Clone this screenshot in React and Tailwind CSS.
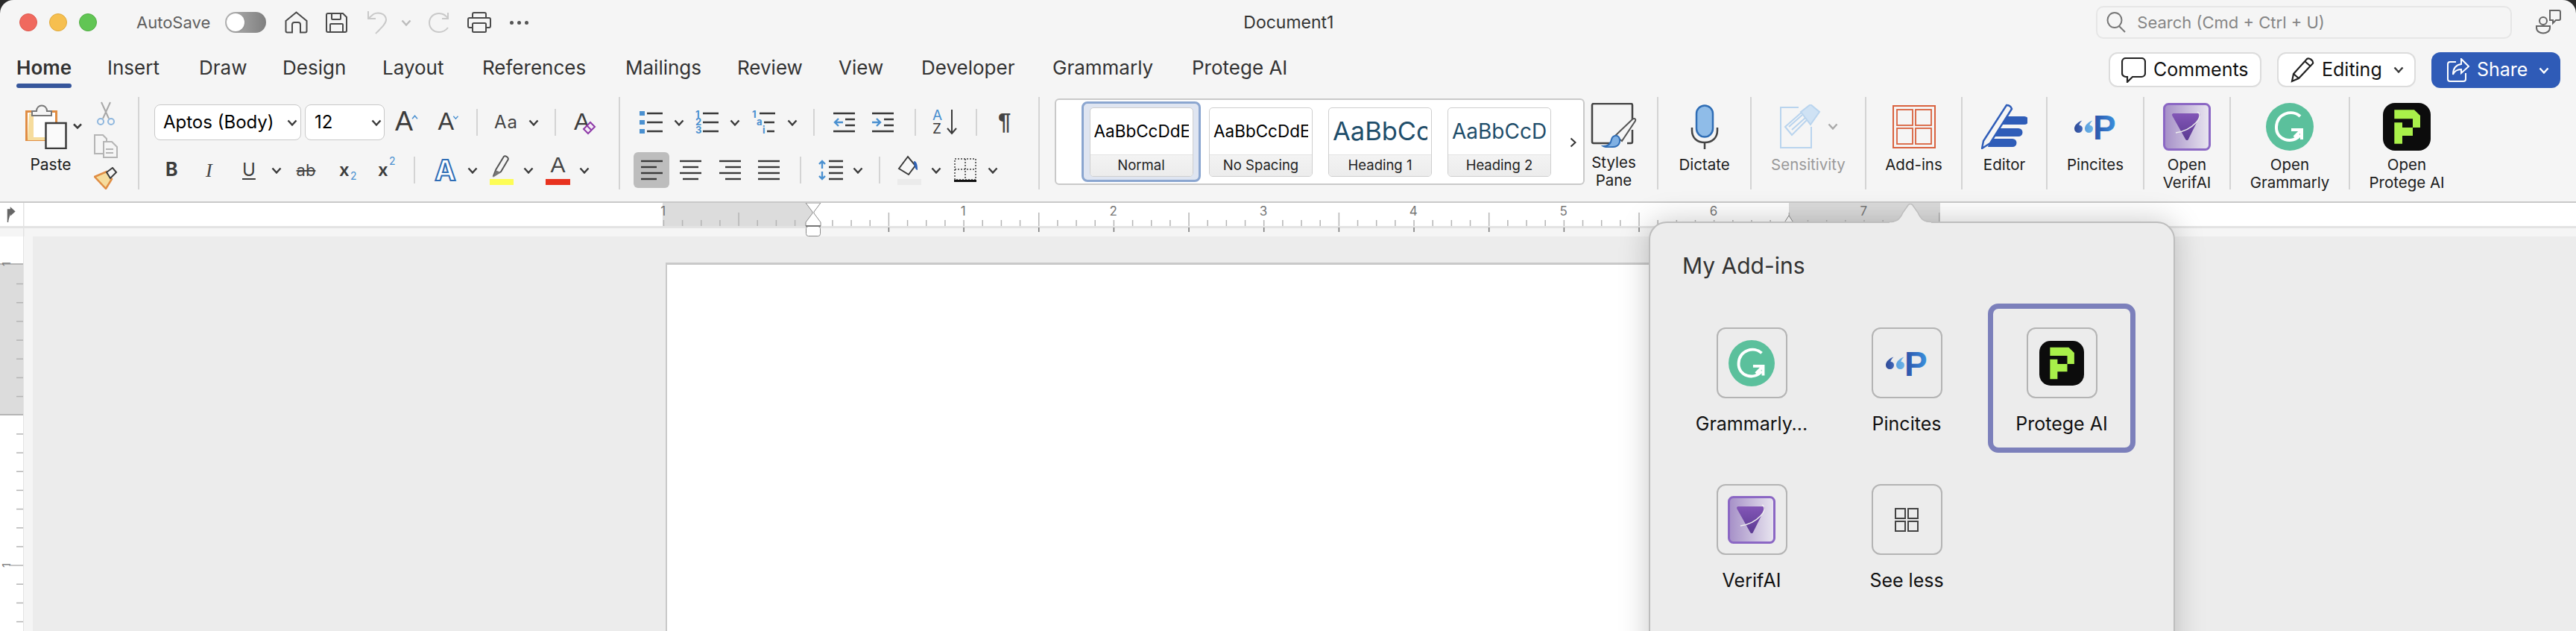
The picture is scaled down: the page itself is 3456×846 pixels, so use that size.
import React from 'react';

const Chev = ({ className = '' }) => (
    <svg viewBox="0 0 14 9" className={`w-[14px] h-[9px] shrink-0 ${className}`} fill="none" stroke="#3a3a3a" strokeWidth="2.4">
        <path d="M1.5 1.5 7 7.5l5.5-6" />
    </svg>
);

const Sep = ({ className = '' }) => <div className={`w-[2px] h-[36px] shrink-0 bg-[#d4d4d4] ${className}`} />;

const Lines = ({ rows, stroke = '#3a3a3a', className = '' }) => (
    <svg viewBox="0 0 29 28" className={`w-[29px] h-[28px] shrink-0 ${className}`} stroke={stroke} strokeWidth="2.4">
        {rows.map((r, i) => <path key={i} d={`M${r[0]} ${2 + i * 8}H${r[1]}`} />)}
    </svg>
);

const HomeIcon = () => (
    <svg viewBox="0 0 31 30" className="w-[31px] h-[30px] ml-[25px]" fill="none" stroke="#4a4a4a" strokeWidth="2">
        <path d="M1.5 13 15.5 1.5 29.5 13v13.5a2 2 0 0 1-2 2H21V18a3 3 0 0 0-3-3h-5a3 3 0 0 0-3 3v10.500H3.500a2 2 0 0 1-2-2z" />
    </svg>
);

const SaveIcon = () => (
    <svg viewBox="0 0 29 27" className="w-[29px] h-[27px] ml-[24px]" fill="none" stroke="#4a4a4a" strokeWidth="2">
        <path d="M3 1h20l5 5v18a2 2 0 0 1-2 2H3a2 2 0 0 1-2-2V3a2 2 0 0 1 2-2z" />
        <path d="M8 1v7a1 1 0 0 0 1 1h10a1 1 0 0 0 1-1V1M6 26V16a1 1 0 0 1 1-1h15a1 1 0 0 1 1 1v10" />
    </svg>
);

const UndoIcon = () => (
    <svg viewBox="0 0 28 32" className="w-[28px] h-[32px] ml-[26px]" fill="none" stroke="#c9c9c9" strokeWidth="2">
        <path d="M2 1v10h10M2 11 9 5c5-3 16-2 17 7 .5 5-6 11-14 19" />
    </svg>
);

const RedoIcon = () => (
    <svg viewBox="0 0 29 28" className="w-[29px] h-[28px] ml-[22px]" fill="none" stroke="#c9c9c9" strokeWidth="2">
        <path d="M27 1v8h-8M27 9c-3-5-7-7-12-7C7 2 2 8 2 14.500 2 21 7 27 15 27c5 0 9-2 12-6" />
    </svg>
);

const PrintIcon = () => (
    <svg viewBox="0 0 32 28" className="w-[32px] h-[28px] ml-[24px]" fill="none" stroke="#4a4a4a" strokeWidth="2">
        <path d="M7 8V3a2 2 0 0 1 2-2h14a2 2 0 0 1 2 2v5M7 21H3a2 2 0 0 1-2-2v-9a2 2 0 0 1 2-2h26a2 2 0 0 1 2 2v9a2 2 0 0 1-2 2h-4" />
        <rect x="7" y="15" width="18" height="12" rx="1.500" />
    </svg>
);

const PasteIcon = () => (
    <svg viewBox="0 0 76 60" className="w-[76px] h-[60px] absolute left-0 top-0" fill="none">
        <path d="M1.500 9.500h40v38h-40z" fill="#fff" stroke="#e08d43" strokeWidth="3" />
        <path d="M5 12h6v32h30v4H3z" fill="#f6dc9d" />
        <path d="M9 15V9h6c0-10 14-10 14 0h6v6z" fill="#f5f5f5" stroke="#777" strokeWidth="2" />
        <rect x="27.500" y="25" width="27" height="34" fill="#fafafa" stroke="#3c3c3c" strokeWidth="2.500" />
        <path d="M65 26.500 70 31.500 75 26.500" stroke="#3a3a3a" strokeWidth="2.500" />
    </svg>
);

const ScissorsIcon = () => (
    <svg viewBox="0 0 32 32" className="w-[32px] h-[32px]" fill="none">
        <path d="M10 1 20 23M22 1 12 23" stroke="#a8a8a8" strokeWidth="2" />
        <circle cx="9" cy="27" r="4" stroke="#8fb7de" strokeWidth="2" />
        <circle cx="23" cy="27" r="4" stroke="#8fb7de" strokeWidth="2" />
    </svg>
);

const CopyIcon = () => (
    <svg viewBox="0 0 32 32" className="w-[32px] h-[32px] mt-[12px]" fill="none" stroke="#b5b5b5" strokeWidth="2">
        <path d="M13 26H1V1h11l5 5v4" />
        <path d="M13 10h11l7 7v14H13zM16 20h10M16 25h10" />
    </svg>
);

const BrushIcon = () => (
    <svg viewBox="0 0 32 30" className="w-[32px] h-[30px] mt-[12px]">
        <path d="M1 13 17 6l7 10-8 13z" fill="#f6dc9d" stroke="#e08d43" strokeWidth="2.500" />
        <path d="M17 6 23 1l2 3-1 3 6 1-8 8" fill="#f5f5f5" />
        <path d="M17 7 25 1l5 6-8 8z" fill="none" stroke="#3c3c3c" strokeWidth="2" />
    </svg>
);

const GrowIcon = ({ up }) => (
    <span className="relative block w-[31px] h-[26px] shrink-0">
        <span className="absolute left-0 -bottom-[4px] text-[#3c3c3c] font-['Liberation_Sans',sans-serif] leading-none text-[36px]">A</span>
        <svg viewBox="0 0 10 7" className="w-[9px] h-[6px] absolute right-0 top-[3px]" fill="none" stroke="#4a90d0" strokeWidth="1.800">
            <path d={up ? 'M1 6 5 1.500 9 6' : 'M1 1 5 5.500 9 1'} />
        </svg>
    </span>
);

const ClearFormatIcon = () => (
    <span className="relative block w-[31px] h-[34px] ml-[24px] shrink-0">
        <span className="absolute left-0 top-0 text-[#3c3c3c] font-['Liberation_Sans',sans-serif] leading-none text-[32px]">A</span>
        <svg viewBox="0 0 20 20" className="w-[20px] h-[20px] absolute right-0 -bottom-[1px]" fill="#f4ecf7" stroke="#8e3aa8" strokeWidth="2">
            <path d="M2 11 11 2l6 6-9 9z" />
            <path d="M6.500 6.500l6 6" />
        </svg>
    </span>
);

const ColorA = ({ bar, className = '' }) => (
    <span className={`relative block w-[33px] h-[40px] shrink-0 ${className}`}>
        <span className="absolute left-0 right-0 top-[-2px] text-center text-[#444] font-['Liberation_Sans',sans-serif] leading-none text-[30px]">A</span>
        <span className={`absolute left-0 right-0 bottom-0 h-[8px] ${bar}`} />
    </span>
);

const HighlightIcon = () => (
    <span className="relative block w-[32px] h-[40px] shrink-0 ml-[16px]">
        <svg viewBox="0 0 32 32" className="w-[32px] h-[31px] absolute left-0 top-0" fill="none">
            <path d="M5 28 8 20 19 2c2-2 7 1 6 4L15 23z" fill="#f5f5f5" stroke="#555" strokeWidth="2" />
            <path d="M4 31 8 21l7 3z" fill="#777" />
        </svg>
        <span className="absolute left-0 right-0 bottom-0 h-[8px] bg-[#fdfd55]" />
    </span>
);

const BulletsIcon = ({ kind, className = '' }) => {
    const labels = kind === 'num' ? ['1', '2', '3'] : kind === 'multi' ? ['1', 'a', 'i'] : null;
    return (
        <span className={`relative block w-[31px] h-[30px] shrink-0 ${className}`}>
            <svg viewBox="0 0 31 30" className="w-[31px] h-[30px] absolute inset-0" stroke="#3a3a3a" strokeWidth="2.400">
                <path d={kind === 'multi' ? 'M10 3h21M16 15h14M20 27h10' : 'M10 3h21M10 15h21M10 27h21'} />
                {kind === 'bullet' && <path d="M0 3h7M0 15h7M0 27h7" stroke="#4a90d0" strokeWidth="6" />}
            </svg>
            {labels && labels.map((t, i) => (
                <span key={i} className={`absolute ${kind === 'multi' ? (i === 0 ? 'left-0' : i === 1 ? 'left-[6px]' : 'left-[14px]') : 'left-0'} ${i === 0 ? '-top-[3px]' : i === 1 ? 'top-[7px]' : 'top-[18px]'} text-[13px] leading-[14px] font-bold text-[#4a90d0]`}>{t}</span>
            ))}
        </span>
    );
};

const IndentIcon = ({ dir, className = '' }) => (
    <svg viewBox="0 0 29 28" className={`w-[29px] h-[28px] shrink-0 ${className}`} fill="none" stroke="#3a3a3a" strokeWidth="2.400">
        <path d="M0 2h29M16 10h13M16 18h13M0 26h29" />
        <path d={dir === 'out' ? 'M13 14H2M7 9l-5 5 5 5' : 'M0 14h11M6 9l5 5-5 5'} stroke="#4a90d0" />
    </svg>
);

const SortIcon = () => (
    <span className="relative block w-[33px] h-[34px] ml-[22px] shrink-0">
        <span className="absolute left-0 -top-[1px] text-[19px] leading-[18px] text-[#4a90d0]">A</span>
        <span className="absolute left-0 top-[17px] text-[19px] leading-[18px] text-[#3a3a3a]">Z</span>
        <svg viewBox="0 0 14 34" className="w-[14px] h-[34px] absolute right-0 top-0" fill="none" stroke="#3a3a3a" strokeWidth="2">
            <path d="M7 0v32M1 25l6 7 6-7" />
        </svg>
    </span>
);

const LineSpacingIcon = () => (
    <svg viewBox="0 0 33 28" className="w-[33px] h-[28px] ml-[23px] shrink-0" fill="none" stroke="#3a3a3a" strokeWidth="2.400">
        <path d="M14 2h19M14 10h19M14 18h19M14 26h19" />
        <path d="M5 3v9M1 6l4-4 4 4M5 25v-9M1 22l4 4 4-4" stroke="#4a90d0" />
    </svg>
);

const ShadingIcon = () => (
    <span className="relative block w-[32px] h-[40px] ml-[23px] shrink-0">
        <svg viewBox="0 0 32 32" className="w-[32px] h-[32px] absolute left-0 top-0" fill="none">
            <path d="M2 18 14 2l10 12-9 12z" stroke="#3c3c3c" strokeWidth="2" fill="#f8f8f8" />
            <path d="M22 8c3 0 5 3 5 12-3 0-5-6-5-12z" fill="#2f62b5" />
        </svg>
        <span className="absolute left-0 right-0 bottom-0 h-[8px] bg-[#ebebeb]" />
    </span>
);

const BordersIcon = () => (
    <svg viewBox="0 0 30 32" className="w-[30px] h-[32px] ml-[17px] shrink-0" fill="none">
        <path d="M1 1h28v28H1zM15 1v28M1 15h28" stroke="#3c3c3c" strokeWidth="1.500" strokeDasharray="2 2" />
        <path d="M0 30.500h30" stroke="#111" strokeWidth="3" />
    </svg>
);

const StylesIcon = () => (
    <svg viewBox="0 0 62 60" className="w-[62px] h-[60px]" fill="none">
        <path d="M32 54H4a2 2 0 0 1-2-2V3a2 2 0 0 1 2-2h50a2 2 0 0 1 2 2v20M56 36v16a2 2 0 0 1-2 2h-5" stroke="#444" strokeWidth="2.500" />
        <path d="M33 44 56 22c2-2 5-1 4 2L42 51z" fill="#f5f5f5" stroke="#555" strokeWidth="2" />
        <path d="M17 58c7 0 10-3 11-9 1-5 7-7 10-3 3 6 0 13-8 13-5 0-10 1-13-1z" fill="#7fb0e3" stroke="#2f6db5" strokeWidth="2" />
    </svg>
);

const MicIcon = () => (
    <svg viewBox="0 0 38 60" className="w-[38px] h-[60px]" fill="none">
        <rect x="8" y="1.500" width="22" height="42" rx="11" fill="#8fbce8" stroke="#2f6db5" strokeWidth="2.500" />
        <path d="M2 31v4c0 10 7 16 17 16s17-6 17-16v-4M19 51v9" stroke="#444" strokeWidth="2.500" />
    </svg>
);

const SensitivityIcon = () => (
    <span className="flex items-center">
        <svg viewBox="0 0 56 60" className="w-[56px] h-[60px]" fill="none" stroke="#b9d4ee" strokeWidth="2">
            <path d="M26 4H2v54h41V30" />
            <path d="M8 30 32 9l8 9-23 23z" fill="#f5f5f5" />
            <path d="M13 30 31 14M17 34 35 18" />
            <path d="M29 10 42 0l12 10-12 17z" fill="#cfe2f4" />
        </svg>
        <Chev className="ml-[9px] opacity-40" />
    </span>
);

const AddinsIcon = () => (
    <svg viewBox="0 0 58 58" className="w-[58px] h-[58px]" fill="none" stroke="#d9623f">
        <rect x="1" y="1" width="56" height="56" strokeWidth="2" />
        <rect x="6" y="6" width="21" height="21" strokeWidth="1.800" />
        <rect x="31" y="6" width="21" height="21" strokeWidth="1.800" />
        <rect x="6" y="31" width="21" height="21" strokeWidth="1.800" />
        <rect x="31" y="31" width="21" height="21" strokeWidth="1.800" />
    </svg>
);

const EditorIcon = () => (
    <svg viewBox="0 0 62 61" className="w-[62px] h-[61px]" fill="none">
        <path d="M28 17h30a4.500 4.500 0 0 1 0 11H22zM20 33h30a4.500 4.500 0 0 1 0 11H16zM12 47h30a4.500 4.500 0 0 1 0 11H9z" fill="#2f5db8" />
        <path d="M3 50 34 2c3 0 6 2 7 5L12 53 1 60z" fill="#f5f5f5" stroke="#2f5db8" strokeWidth="2.400" />
    </svg>
);

const PincitesIcon = () => (
    <svg viewBox="0 0 56 34" className="w-[56px] h-[34px]">
        <defs>
            <linearGradient id="pq1" x1="0" x2="1" y1="0" y2="0">
                <stop offset="0" stopColor="#2f4a96" />
                <stop offset="1" stopColor="#3f66b8" />
            </linearGradient>
            <linearGradient id="pq2" x1="0" x2="1" y1="0" y2="0">
                <stop offset="0" stopColor="#5a9fdd" />
                <stop offset="1" stopColor="#6db4e8" />
            </linearGradient>
            <linearGradient id="pp" x1="0" x2="1" y1="0" y2="0">
                <stop offset="0" stopColor="#2c4ea6" />
                <stop offset="1" stopColor="#3a92de" />
            </linearGradient>
        </defs>
        <path d="M10.500 8.500C5 10.500 0 14.500 0 19.500a5.500 5.500 0 0 0 11 0c0-3-2-4.500-4.500-4.500 0-2 2-4.500 4-6.500z" fill="url(#pq1)" />
        <path d="M24.500 8.500C19 10.500 14 14.500 14 19.500a5.500 5.500 0 0 0 11 0c0-3-2-4.500-4.500-4.500 0-2 2-4.500 4-6.500z" fill="url(#pq2)" />
        <text x="25" y="33.500" fontFamily="Liberation Sans, sans-serif" fontWeight="700" fontSize="46" fill="url(#pp)">P</text>
    </svg>
);

const VerifIcon = ({ size = 'w-[64px] h-[64px]' }) => (
    <svg viewBox="0 0 64 64" className={size}>
        <defs>
            <linearGradient id="vbg" x1="0" x2="1" y1="0" y2="0">
                <stop offset="0" stopColor="#a58fc7" />
                <stop offset="1" stopColor="#e9e6f0" />
            </linearGradient>
            <linearGradient id="vtri" x1="0" x2="0" y1="0" y2="1">
                <stop offset="0" stopColor="#8155b5" />
                <stop offset="1" stopColor="#5d3c94" />
            </linearGradient>
        </defs>
        <rect x="1.500" y="1.500" width="61" height="61" rx="6" fill="url(#vbg)" stroke="#8b67c4" strokeWidth="3" />
        <path d="M14 16H48L32 48z" fill="url(#vtri)" stroke="url(#vtri)" strokeWidth="4" strokeLinejoin="round" />
        <path d="M46 12C56 17 40 37 17 40" fill="none" stroke="#eee" strokeWidth="1.500" />
    </svg>
);

const GrammarlyIcon = ({ size = 'w-[64px] h-[64px]' }) => (
    <svg viewBox="0 0 64 64" className={size} fill="none">
        <circle cx="32" cy="32" r="32" fill="#5bc09c" />
        <path d="M46 18C35 8 15 14 14 32c-1 18 22 24 32 11" stroke="#fff" strokeWidth="4" />
        <path d="M34 36h14v13M48 36 38 46" stroke="#fff" strokeWidth="4" />
    </svg>
);

const ProtegeIcon = ({ size = 'w-[64px] h-[64px]' }) => (
    <svg viewBox="0 0 64 64" className={size}>
        <rect width="64" height="64" rx="16" fill="#0c0c0c" />
        <path d="M15.300 9.300H42L50 17V33H40V44H26V54.700H15.300V26.300H26V33H40V21.300H15.300z" fill="#a9f04a" />
    </svg>
);

const BigButton = ({ icon, label, sub, gray, className }) => (
    <div className={`flex flex-col items-center shrink-0 ${className}`}>
        <div className="h-[79px] flex items-center justify-center">{icon}</div>
        <div className={`text-[20.500px] leading-[24px] text-center whitespace-nowrap ${gray ? 'text-[#9a9a9a]' : 'text-[#1c1c1c]'}`}>
            <div>{label}</div>
            {sub && <div>{sub}</div>}
        </div>
    </div>
);

const StyleTile = ({ text, label, preview, className = '' }) => (
    <div className={`w-[139px] h-[93px] rounded-[5px] border border-[#cfcfcf] bg-white flex flex-col overflow-hidden shrink-0 ${className}`}>
        <div className="h-[62px] mx-[5px] flex items-center overflow-hidden">
            <span className={`whitespace-nowrap ${preview}`}>{text}</span>
        </div>
        <div className="flex-1 bg-gradient-to-b from-[#f3f3f3] to-[#ececec] border-t border-[#e4e4e4] flex items-center justify-center text-[18.500px] text-[#222]">{label}</div>
    </div>
);

const TABS = [
    ['Home', 'w-[122px]'], ['Insert', 'w-[123px]'], ['Draw', 'w-[112px]'], ['Design', 'w-[134px]'],
    ['Layout', 'w-[134px]'], ['References', 'w-[192px]'], ['Mailings', 'w-[150px]'], ['Review', 'w-[136px]'],
    ['View', 'w-[111px]'], ['Developer', 'w-[176px]'], ['Grammarly', 'w-[187px]'], ['Protege AI', 'w-[140px]'],
];

const ZERO = 1091;
const STEP = 25.165;

const HRuler = () => {
    const ticks = [];
    for (let i = -8; i <= 60; i++) ticks.push(i);
    const nums = [[-8, '1'], [8, '1'], [16, '2'], [24, '3'], [32, '4'], [40, '5'], [48, '6'], [56, '7']];
    return (
        <svg className="block w-[3456px] h-[45px] shrink-0" viewBox="0 0 3456 45">
            <rect width="3456" height="31" fill="#fff" />
            <rect x="889" width="202" height="31" fill="#dcdcdc" />
            <rect x="2400" width="203" height="31" fill="#dcdcdc" />
            <rect y="31" width="3456" height="3" fill="#e3e3e3" />
            <rect y="34" width="3456" height="11" fill="#f5f5f5" />
            <rect x="31" width="1.500" height="45" fill="#e3e3e3" />
            <path d="M10.500 26V9h4V7l5 4.500-5 4.500v-3" fill="#666" stroke="#666" strokeWidth="1.500" />
            {ticks.map(i => {
                const x = ZERO + i * STEP;
                const half = i % 8 !== 0 && i % 4 === 0;
                return <rect key={i} x={x} y={half ? 13 : 23} width="1.500" height={half ? 18 : 8} fill="#b5b5b5" />;
            })}
            {ticks.filter(i => i > 0 && i % 4 === 0).map(i => (
                <rect key={i} x={ZERO + i * STEP} y="33" width="1.500" height="6" fill="#777" />
            ))}
            {nums.map(([i, t]) => (
                <text key={i} x={ZERO + i * STEP} y="17" textAnchor="middle" fontFamily="Inter, sans-serif" fontSize="17" fill="#777">{t}</text>
            ))}
            <path d="M1081 0h20l-9 12v2l9 12v5h-20v-5l9-12v-2z" fill="#fff" stroke="#8a8a8a" strokeWidth="1" />
            <rect x="1081.500" y="31.500" width="19" height="13" rx="3" fill="#fff" stroke="#8a8a8a" />
            <rect x="1081" y="30" width="20" height="2" fill="#777" />
            <path d="M2391 31l9-14 9 14z" fill="#fff" stroke="#8a8a8a" />
        </svg>
    );
};

const VRuler = () => {
    const marks = [];
    for (let i = -7; i < 21; i++) marks.push(i);
    return (
        <svg className="block w-[32px] h-[530px] shrink-0 bg-white" viewBox="0 0 32 530">
            <rect y="37" width="31" height="202" fill="#dcdcdc" />
            <rect y="36" width="31" height="2" fill="#b5b5b5" />
            <rect y="238" width="31" height="2" fill="#b5b5b5" />
            <rect x="31" width="1.500" height="530" fill="#e3e3e3" />
            {marks.map(i => {
                const y = 239 + i * STEP;
                const tall = (i + 100) % 4 === 0 && (i + 100) % 8 !== 0;
                if (i === 0) return null;
                return <rect key={i} x={tall ? 12 : 22} y={y} width={tall ? 19 : 9} height="1.500" fill="#b5b5b5" />;
            })}
            <text x="9" y="446" textAnchor="middle" fontFamily="Inter, sans-serif" fontSize="15" fill="#777" transform="rotate(-90 9 441)">1</text>
            <text x="9" y="42" textAnchor="middle" fontFamily="Inter, sans-serif" fontSize="15" fill="#777" transform="rotate(-90 9 37)">1</text>
        </svg>
    );
};

const AddinTile = ({ icon, label, selected }) => (
    <div className={`w-[198px] h-[200px] rounded-[14px] border-[7px] flex flex-col items-center pt-[25px] ${selected ? 'border-[#7c80bb]' : 'border-transparent'}`}>
        <div className="w-[95px] h-[95px] rounded-[12px] border-2 border-[#b4b4b4] flex items-center justify-center">{icon}</div>
        <div className="mt-[19px] text-[25px] leading-[30px] text-[#111] whitespace-nowrap">{label}</div>
    </div>
);

const App = () => {
    return (
        <div className="relative w-[3456px] h-[846px] overflow-hidden bg-[#2a2a2a] font-[Inter,sans-serif]">
            <div className="h-full rounded-t-[18px] overflow-hidden bg-[#f5f5f5] flex flex-col">
                {/* title bar */}
                <div className="h-[60px] shrink-0 flex items-center relative">
                    <div className="flex items-center pl-[26px] gap-[16px]">
                        <span className="w-[24px] h-[24px] rounded-full bg-[#f0695e] border border-[#dd5a50]" />
                        <span className="w-[24px] h-[24px] rounded-full bg-[#f6bf4f] border border-[#dfa93c]" />
                        <span className="w-[24px] h-[24px] rounded-full bg-[#61c554] border border-[#52ad45]" />
                    </div>
                    <span className="ml-[53px] text-[22px] text-[#5f5f5f]">AutoSave</span>
                    <div className="ml-[20px] w-[55px] h-[28px] rounded-full bg-gradient-to-r from-[#b5b5b5] to-[#7f7f7f] p-[2px] shrink-0">
                        <div className="w-[24px] h-[24px] rounded-full bg-white shadow" />
                    </div>
                    <HomeIcon />
                    <SaveIcon />
                    <UndoIcon />
                    <Chev className="ml-[18px] opacity-30" />
                    <RedoIcon />
                    <PrintIcon />
                    <div className="ml-[25px] flex gap-[5px]">
                        <span className="w-[5px] h-[5px] rounded-full bg-[#555]" />
                        <span className="w-[5px] h-[5px] rounded-full bg-[#555]" />
                        <span className="w-[5px] h-[5px] rounded-full bg-[#555]" />
                    </div>
                    <span className="ml-[959px] w-[125px] shrink-0 text-[23px] text-[#333] whitespace-nowrap">Document1</span>
                    <div className="ml-[1019px] w-[558px] h-[44px] rounded-[10px] border-2 border-[#e6e6e6] flex items-center pl-[12px] shrink-0">
                        <svg viewBox="0 0 26 28" className="w-[26px] h-[28px]" fill="none" stroke="#777" strokeWidth="2">
                            <ellipse cx="11" cy="11" rx="9.500" ry="10" />
                            <path d="M17 19l8 8" />
                        </svg>
                        <span className="ml-[15px] text-[22px] text-[#868686] whitespace-nowrap">Search (Cmd + Ctrl + U)</span>
                    </div>
                    <svg viewBox="0 0 34 34" className="w-[34px] h-[34px] ml-[32px]" fill="none" stroke="#666" strokeWidth="2">
                        <circle cx="10" cy="15" r="5" />
                        <path d="M1 22h18v2c0 10-18 10-18 0z" />
                        <path d="M19 1h12a2 2 0 0 1 2 2v9a2 2 0 0 1-2 2h-4l-4 4v-4h-4z" />
                    </svg>
                </div>

                {/* tabs */}
                <div className="h-[70px] shrink-0 flex items-start pl-[22px] pt-[16px] relative">
                    {TABS.map(([t, w], i) => (
                        <div key={t} className={`${w} shrink-0`}>
                            <div className={`inline-flex flex-col text-[26px] leading-[30px] whitespace-nowrap ${i === 0 ? 'font-semibold text-[#333]' : 'text-[#333]'}`}>
                                {t}
                                {i === 0 && <span className="h-[6px] mt-[6px] rounded-full bg-[#36569b]" />}
                            </div>
                        </div>
                    ))}
                    <div className="absolute right-[21px] top-[10px] flex gap-[21px]">
                        <div className="w-[205px] h-[47px] rounded-[12px] bg-white border-2 border-[#dcdcdc] flex items-center pl-[15px] text-[25px] text-[#111]">
                            <svg viewBox="0 0 33 34" className="w-[33px] h-[34px]" fill="none" stroke="#222" strokeWidth="2.200">
                                <path d="M6 1h21a5 5 0 0 1 5 5v15a5 5 0 0 1-5 5H15l-7 7v-7H6a5 5 0 0 1-5-5V6a5 5 0 0 1 5-5z" />
                            </svg>
                            <span className="ml-[10px]">Comments</span>
                        </div>
                        <div className="w-[186px] h-[47px] rounded-[12px] bg-white border-2 border-[#dcdcdc] flex items-center pl-[16px] text-[25px] text-[#111]">
                            <svg viewBox="0 0 32 34" className="w-[32px] h-[34px]" fill="none" stroke="#222" strokeWidth="2.200">
                                <path d="M2 32 4 22 22 2c3-2 9 2 8 6L11 28zM4 22l7 6M19 5l8 7" />
                            </svg>
                            <span className="ml-[10px]">Editing</span>
                            <Chev className="ml-[15px]" />
                        </div>
                        <div className="w-[173px] h-[48px] rounded-[12px] bg-[#2f5bb7] flex items-center pl-[21px] text-[25px] text-white">
                            <svg viewBox="0 0 30 32" className="w-[30px] h-[32px]" fill="none" stroke="#fff" strokeWidth="2">
                                <path d="M12 5H4a3 3 0 0 0-3 3v20a3 3 0 0 0 3 3h18a3 3 0 0 0 3-3v-8" />
                                <path d="M19 1l10 10-10 9v-5c-6 0-9 2-11 7 0-9 4-13 11-14z" />
                            </svg>
                            <span className="ml-[10px]">Share</span>
                            <Chev className="ml-[15px] [&>path]:stroke-white" />
                        </div>
                    </div>
                </div>

                {/* ribbon */}
                <div className="h-[142px] shrink-0 flex items-start border-b-2 border-[#c9c9c9] text-[#222]">
                    <div className="w-[187px] h-[124px] shrink-0 border-r-2 border-[#d4d4d4] flex">
                        <div className="ml-[34px] w-[68px] pt-[10px] shrink-0">
                            <div className="relative h-[60px] w-[68px]"><PasteIcon /></div>
                            <div className="mt-[9px] text-[21px] leading-[24px] text-center text-[#1c1c1c]">Paste</div>
                        </div>
                        <div className="ml-[24px] pt-[6px] flex flex-col">
                            <ScissorsIcon />
                            <CopyIcon />
                            <BrushIcon />
                        </div>
                    </div>

                    <div className="w-[645px] h-[124px] shrink-0 border-r-2 border-[#d4d4d4] pt-[10px] flex flex-col gap-[16px]">
                        <div className="h-[48px] flex items-center pl-[20px]">
                            <div className="w-[197px] h-[48px] rounded-[8px] bg-white border border-[#c9c9c9] flex items-center pl-[11px] text-[24px] shrink-0">
                                <span className="w-[166px] whitespace-nowrap text-black">Aptos (Body)</span>
                                <Chev className="w-[12px]" />
                            </div>
                            <div className="ml-[5px] w-[107px] h-[48px] rounded-[8px] bg-white border border-[#c9c9c9] flex items-center pl-[12px] text-[24px] shrink-0">
                                <span className="w-[76px] text-black">12</span>
                                <Chev className="w-[12px]" />
                            </div>
                            <div className="ml-[14px]"><GrowIcon up /></div>
                            <div className="ml-[25px] scale-90"><GrowIcon /></div>
                            <Sep className="ml-[22px]" />
                            <span className="ml-[22px] w-[30px] text-[24px] text-[#444] tracking-[1px] shrink-0">Aa</span>
                            <Chev className="ml-[16px]" />
                            <Sep className="ml-[21px]" />
                            <ClearFormatIcon />
                        </div>
                        <div className="h-[48px] flex items-center">
                            <span className="ml-[35px] w-[17px] text-[25px] font-bold text-[#3c3c3c] shrink-0">B</span>
                            <span className="ml-[37px] w-[13px] text-[26px] italic font-['Liberation_Serif',serif] text-[#444] shrink-0">I</span>
                            <span className="ml-[36px] w-[17px] text-[24px] text-[#3c3c3c] underline underline-offset-[3px] decoration-2 shrink-0">U</span>
                            <Chev className="ml-[22px]" />
                            <span className="ml-[16px] w-[33px] text-center text-[22px] text-[#444] line-through shrink-0">ab</span>
                            <span className="ml-[28px] w-[23px] text-[24px] font-semibold text-[#3c3c3c] shrink-0 relative">x<span className="absolute left-[15px] top-[15px] text-[14px] font-normal text-[#4a90d0]">2</span></span>
                            <span className="ml-[29px] w-[23px] text-[24px] font-semibold text-[#3c3c3c] shrink-0 relative">x<span className="absolute left-[15px] -top-[5px] text-[14px] font-normal text-[#4a90d0]">2</span></span>
                            <Sep className="ml-[25px]" />
                            <span className="ml-[24px] w-[33px] text-center text-[38px] leading-[40px] font-bold text-white [-webkit-text-stroke:2px_#2f6db5] shrink-0">A</span>
                            <Chev className="ml-[13px]" />
                            <HighlightIcon />
                            <Chev className="ml-[13px]" />
                            <ColorA bar="bg-[#e8321f]" className="ml-[16px]" />
                            <Chev className="ml-[12px]" />
                        </div>
                    </div>

                    <div className="w-[563px] h-[124px] shrink-0 border-r-2 border-[#d4d4d4] pt-[10px] flex flex-col gap-[16px]">
                        <div className="h-[48px] flex items-center">
                            <BulletsIcon kind="bullet" className="ml-[26px]" />
                            <Chev className="ml-[15px]" />
                            <BulletsIcon kind="num" className="ml-[15px]" />
                            <Chev className="ml-[15px]" />
                            <BulletsIcon kind="multi" className="ml-[16px]" />
                            <Chev className="ml-[16px]" />
                            <Sep className="ml-[21px]" />
                            <IndentIcon dir="out" className="ml-[25px]" />
                            <IndentIcon dir="in" className="ml-[23px]" />
                            <Sep className="ml-[28px]" />
                            <SortIcon />
                            <Sep className="ml-[25px]" />
                            <span className="ml-[28px] w-[21px] text-[31px] font-bold font-['Liberation_Sans',sans-serif] text-[#444] shrink-0">¶</span>
                        </div>
                        <div className="h-[48px] flex items-center">
                            <div className="ml-[18px] w-[48px] h-[48px] rounded-[6px] bg-[#bdbdbd] flex items-center justify-center shrink-0">
                                <Lines rows={[[0, 29], [0, 21], [0, 29], [0, 21]]} />
                            </div>
                            <Lines rows={[[0, 29], [4, 25], [0, 29], [4, 25]]} className="ml-[14px]" />
                            <Lines rows={[[0, 29], [8, 29], [0, 29], [8, 29]]} className="ml-[24px]" />
                            <Lines rows={[[0, 29], [0, 29], [0, 29], [0, 29]]} className="ml-[23px]" />
                            <Sep className="ml-[27px]" />
                            <LineSpacingIcon />
                            <Chev className="ml-[13px]" />
                            <Sep className="ml-[21px]" />
                            <ShadingIcon />
                            <Chev className="ml-[13px]" />
                            <BordersIcon />
                            <Chev className="ml-[15px]" />
                        </div>
                    </div>

                    <div className="w-[830px] h-[124px] shrink-0 border-r-2 border-[#d4d4d4] flex">
                        <div className="ml-[20px] mt-[2px] w-[711px] h-[116px] rounded-[6px] bg-white border-2 border-[#c9c9c9] flex items-start shrink-0 relative">
                            <div className="ml-[34px] mt-[2px] w-[160px] h-[108px] rounded-[8px] bg-[#dfe5f1] border-[3px] border-[#8ba6d0] flex items-center justify-center shrink-0">
                                <StyleTile text="AaBbCcDdEe" label="Normal" preview="text-[22.500px] text-black" />
                            </div>
                            <StyleTile text="AaBbCcDdEe" label="No Spacing" preview="text-[22.500px] text-black" className="ml-[11px] mt-[10px]" />
                            <StyleTile text="AaBbCc" label="Heading 1" preview="text-[34.500px] text-[#1f4e6b]" className="ml-[21px] mt-[10px]" />
                            <StyleTile text="AaBbCcDd" label="Heading 2" preview="text-[28px] text-[#1f4e6b]" className="ml-[21px] mt-[10px]" />
                            <svg viewBox="0 0 9 14" className="w-[9px] h-[14px] ml-[25px] mt-[50px]" fill="none" stroke="#333" strokeWidth="2">
                                <path d="M1.500 1.500 7.500 7l-6 5.500" />
                            </svg>
                        </div>
                        <BigButton icon={<StylesIcon />} label="Styles" sub="Pane" className="w-[78px]" />
                    </div>

                    <div className="w-[125px] h-[124px] shrink-0 border-r-2 border-[#d4d4d4]"><BigButton icon={<MicIcon />} label="Dictate" /></div>
                    <div className="w-[154px] h-[124px] shrink-0 border-r-2 border-[#d4d4d4]"><BigButton icon={<SensitivityIcon />} label="Sensitivity" gray /></div>
                    <div className="w-[129px] h-[124px] shrink-0 border-r-2 border-[#d4d4d4]"><BigButton icon={<AddinsIcon />} label="Add-ins" /></div>
                    <div className="w-[114px] h-[124px] shrink-0 border-r-2 border-[#d4d4d4]"><BigButton icon={<EditorIcon />} label="Editor" /></div>
                    <div className="w-[130px] h-[124px] shrink-0 border-r-2 border-[#d4d4d4]"><BigButton icon={<PincitesIcon />} label="Pincites" /></div>
                    <div className="w-[116px] h-[124px] shrink-0 border-r-2 border-[#d4d4d4]"><BigButton icon={<VerifIcon />} label="Open" sub="VerifAI" /></div>
                    <div className="w-[160px] h-[124px] shrink-0 border-r-2 border-[#d4d4d4]"><BigButton icon={<GrammarlyIcon />} label="Open" sub="Grammarly" /></div>
                    <div className="w-[152px] h-[124px] shrink-0"><BigButton icon={<ProtegeIcon />} label="Open" sub="Protege AI" /></div>
                </div>

                {/* rulers and document */}
                <HRuler />
                <div className="flex flex-1 min-h-0">
                    <VRuler />
                    <div className="w-[12px] shrink-0 bg-[#f5f5f5]" />
                    <div className="flex-1 bg-[#ececec] pl-[849px] pt-[35px] overflow-hidden">
                        <div className="w-[1711px] h-[800px] bg-white border-t-[3px] border-l-2 border-[#c9c9c9]" />
                    </div>
                </div>
            </div>

            {/* add-ins popover */}
            <div className="absolute left-[2212px] top-[297px] w-[706px] h-[620px] rounded-t-[24px] bg-[#ececec] border-2 border-[#bdbdbd] shadow-[0_0_40px_rgba(0,0,0,0.22)] pl-[43px] pt-[40px]">
                <div className="text-[30px] leading-[34px] text-[#333]">My Add-ins</div>
                <div className="-ml-[6px] mt-[34px] grid grid-cols-[198px_198px_198px] gap-x-[10px] gap-y-[10px]">
                    <AddinTile icon={<GrammarlyIcon size="w-[62px] h-[62px]" />} label="Grammarly..." />
                    <AddinTile icon={<PincitesIcon />} label="Pincites" />
                    <AddinTile icon={<ProtegeIcon size="w-[60px] h-[60px]" />} label="Protege AI" selected />
                    <AddinTile icon={<VerifIcon size="w-[64px] h-[64px]" />} label="VerifAI" />
                    <AddinTile
                        icon={
                            <svg viewBox="0 0 32 32" className="w-[32px] h-[32px]" fill="none" stroke="#444" strokeWidth="2">
                                <rect x="1" y="1" width="13" height="13" />
                                <rect x="18" y="1" width="13" height="13" />
                                <rect x="1" y="18" width="13" height="13" />
                                <rect x="18" y="18" width="13" height="13" />
                            </svg>
                        }
                        label="See less"
                    />
                </div>
            </div>
            <svg viewBox="0 0 56 26" className="absolute left-[2535px] top-[273px] w-[56px] h-[26px]">
                <path d="M0 25C10 25 14 21 18 12L25 2C27 0 29 0 31 2L38 12C42 21 46 25 56 25V26H0z" fill="#ececec" />
                <path d="M0 24.500C10 24.500 14 21 18 12L25 2C27 0 29 0 31 2L38 12C42 21 46 24.500 56 24.500" fill="none" stroke="#bdbdbd" strokeWidth="1.500" />
            </svg>
        </div>
    );
};

export default App;
